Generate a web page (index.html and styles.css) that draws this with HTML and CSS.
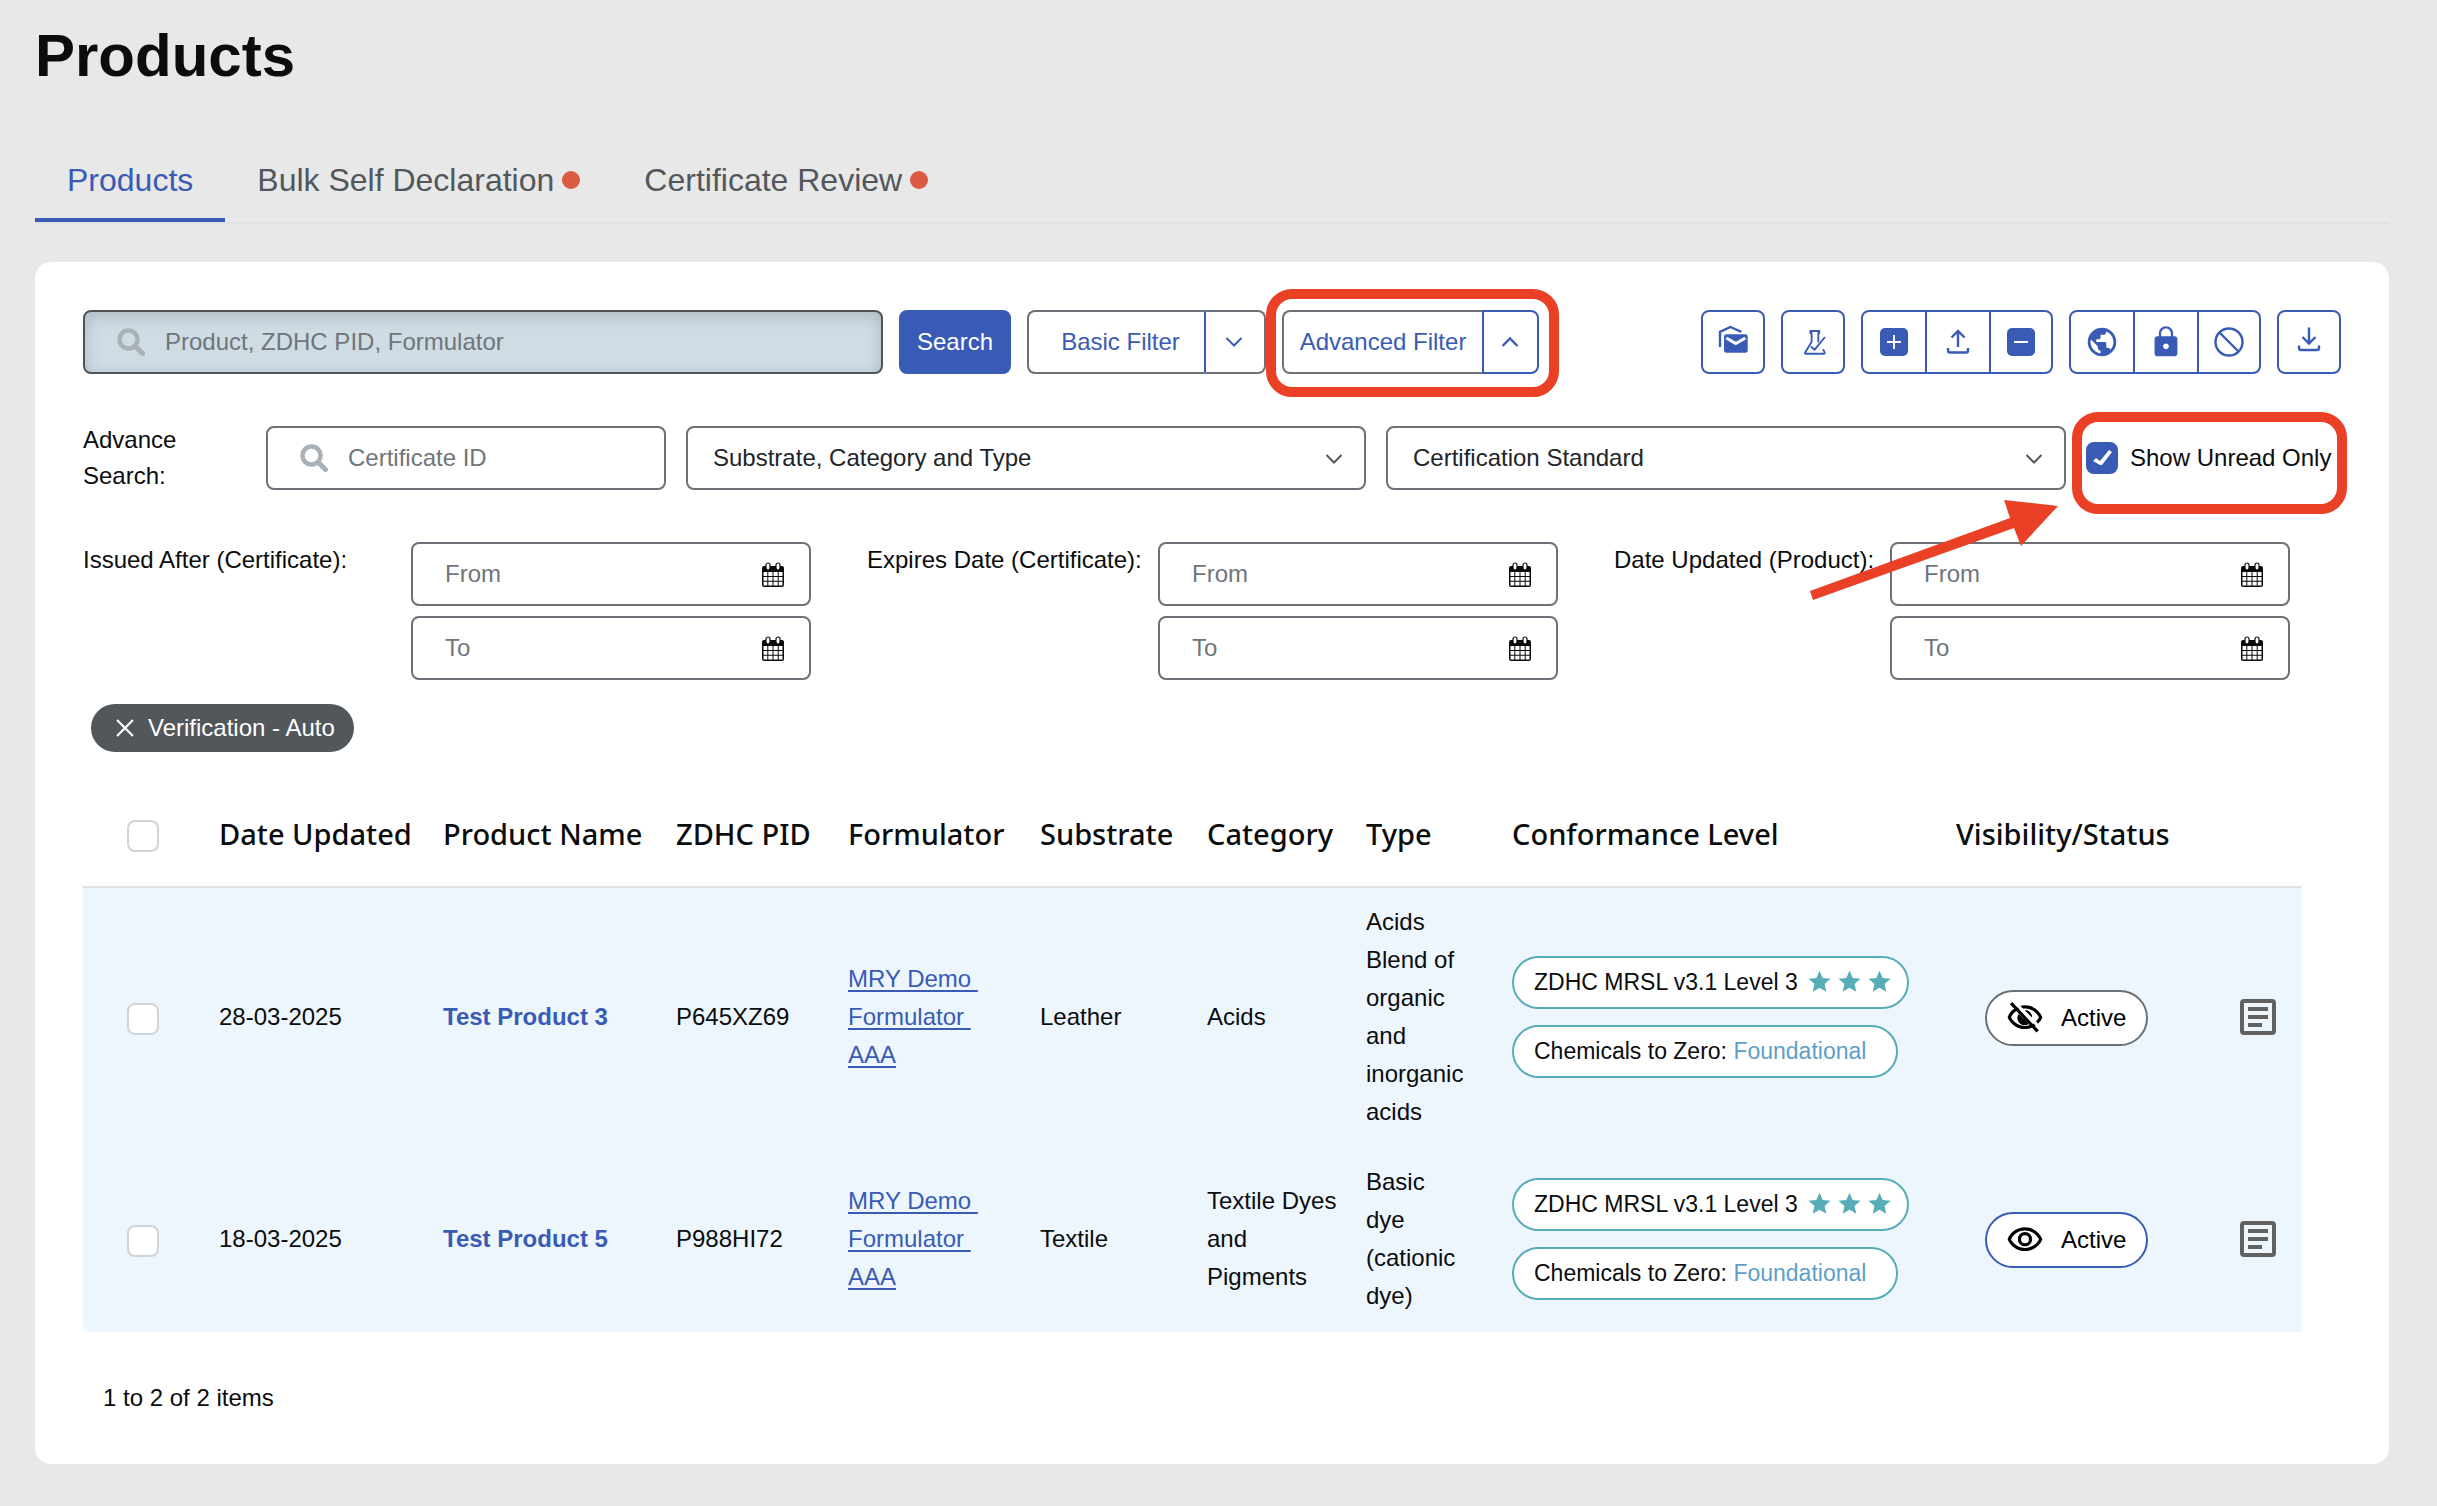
FILE: index.html
```html
<!DOCTYPE html>
<html lang="en">
<head>
<meta charset="utf-8">
<title>Products</title>
<meta name="viewport" content="width=device-width, initial-scale=1">
<link rel="stylesheet" href="styles.css">
</head>
<body>
<svg class="sprite" aria-hidden="true">
  <symbol id="search" viewBox="0 0 28 28"><circle cx="11.5" cy="11.5" r="9" fill="none" stroke="currentColor" stroke-width="4.4"/><path d="M18.500 18.500L25.500 25.500" stroke="currentColor" stroke-width="5" stroke-linecap="round"/></symbol>
  <symbol id="down" viewBox="0 0 18 12"><path d="M1.500 2L9 9.500L16.500 2" fill="none" stroke="currentColor" stroke-width="2"/></symbol>
  <symbol id="up" viewBox="0 0 18 12"><path d="M1.500 10L9 2.500L16.500 10" fill="none" stroke="currentColor" stroke-width="2.400"/></symbol>
  <symbol id="calendar" viewBox="0 0 24 26"><path d="M1 6a2 2 0 0 1 2-2h18a2 2 0 0 1 2 2v17a2 2 0 0 1-2 2H3a2 2 0 0 1-2-2z" fill="#0b0c0d"/><path d="M2.500 10h3.800v3.900H2.500zM7.300 10h4.200v3.900H7.300zM12.500 10h4.200v3.900h-4.200zM17.700 10h3.800v3.900h-3.800zM2.500 14.900h3.800v3.900H2.500zM7.300 14.900h4.200v3.900H7.300zM12.500 14.900h4.200v3.900h-4.200zM17.700 14.900h3.800v3.900h-3.800zM2.500 19.800h3.800v3.700H2.500zM7.300 19.800h4.200v3.700H7.300zM12.500 19.800h4.200v3.700h-4.200zM17.700 19.800h3.800v3.700h-3.800z" fill="#fff"/><rect x="5" y="1" width="4" height="7" rx="2" fill="#fff" stroke="#0b0c0d" stroke-width="1.200"/><rect x="15" y="1" width="4" height="7" rx="2" fill="#fff" stroke="#0b0c0d" stroke-width="1.200"/></symbol>
  <symbol id="star" viewBox="0 0 24 24"><path d="M12 .8l3.300 7.600 8.200.8-6.200 5.500 1.800 8.100L12 18.600l-7.100 4.200 1.800-8.100L.5 9.200l8.200-.8z" fill="currentColor"/></symbol>
  <symbol id="note" viewBox="0 0 36 36"><rect x="2" y="2" width="32" height="32" rx="2" fill="none" stroke="#616161" stroke-width="4"/><path d="M8 10h20M8 18h20M8 26h14" stroke="#616161" stroke-width="4"/></symbol>
  <symbol id="eye" viewBox="0 0 24 24"><path d="M12 6c3.790 0 7.170 2.130 8.820 5.500C19.170 14.870 15.790 17 12 17s-7.170-2.130-8.820-5.500C4.830 8.130 8.210 6 12 6m0-2C7 4 2.730 7.110 1 11.500 2.730 15.890 7 19 12 19s9.270-3.110 11-7.500C21.270 7.110 17 4 12 4zm0 5a2.500 2.500 0 0 1 0 5 2.500 2.500 0 0 1 0-5m0-2c-2.480 0-4.500 2.020-4.500 4.500S9.520 16 12 16s4.500-2.020 4.500-4.500S14.480 7 12 7z"/></symbol>
  <symbol id="eye-off" viewBox="0 0 24 24"><path d="M12 6c3.790 0 7.170 2.130 8.820 5.500C19.170 14.870 15.790 17 12 17s-7.170-2.130-8.820-5.500C4.830 8.130 8.210 6 12 6m0-2C7 4 2.730 7.110 1 11.500 2.730 15.890 7 19 12 19s9.270-3.110 11-7.500C21.270 7.110 17 4 12 4z"/><path d="M8 9.500L14.500 15.600A4.500 4.500 0 0 1 8 9.500zM12 7a4.500 4.500 0 0 1 4.500 4.500l-1.900-.6a2.600 2.600 0 0 0-2-2z"/><path d="M4.800 1.500L21.500 18.200" stroke="#fff" stroke-width="2"/><path d="M3.200 2.600L20 20.500" stroke="#000" stroke-width="2"/></symbol>
</svg>

<main class="page">
  <h1 class="title">Products</h1>
  <nav class="tabs" aria-label="Product sections">
    <a class="tab tab-active" href="#products">Products</a>
    <a class="tab" href="#declaration">Bulk Self Declaration<span class="dot"></span></a>
    <a class="tab" href="#review">Certificate Review<span class="dot"></span></a>
  </nav>

  <section class="card">
    <div class="toolbar">
      <div class="field field-main">
        <svg class="field-icon"><use href="#search"/></svg>
        <input class="input input-search input-tinted" type="text" aria-label="Search products" placeholder="Product, ZDHC PID, Formulator">
      </div>
      <button class="btn btn-primary" type="button">Search</button>
      <div class="split">
        <button class="btn split-text split-basic" type="button">Basic Filter</button>
        <button class="btn split-arrow" type="button" aria-label="Open basic filter"><svg class="chevron"><use href="#down"/></svg></button>
      </div>
      <div class="split">
        <button class="btn split-text split-advanced" type="button">Advanced Filter</button>
        <button class="btn split-arrow split-arrow-open" type="button" aria-label="Close advanced filter"><svg class="chevron"><use href="#up"/></svg></button>
        <span class="highlight highlight-filter"></span>
      </div>
      <div class="actions">
        <div class="group"><button class="tool" type="button" aria-label="Mark as read"><svg viewBox="0 0 40 40"><path d="M7 25V9.800L17.500 5l10.800 4.900" fill="none" stroke="currentColor" stroke-width="2.400"/><rect x="11" y="12.300" width="23.700" height="18.500" rx="2.500" fill="currentColor"/><path d="M13.300 16l9.500 5.600L32.300 16" fill="none" stroke="#fff" stroke-width="3"/></svg></button></div>
        <div class="group"><button class="tool" type="button" aria-label="Test results"><svg viewBox="0 0 40 40" fill="none" stroke="currentColor" stroke-width="1.900" stroke-linejoin="round"><path d="M18.600 20V11h-1.300V9h9v2h-1v9.200M18.600 20l-6.500 10.500q-.5 1.200.8 1.200h18.500q1-.6-1.400-4.400M18 24.500l3.500 3.300L32 15"/></svg></button></div>
        <div class="group">
          <button class="tool" type="button" aria-label="Add"><svg viewBox="0 0 40 40"><rect x="6" y="6" width="28" height="28" rx="5" fill="currentColor"/><path d="M20 13v14M13 20h14" stroke="#fff" stroke-width="2"/></svg></button>
          <button class="tool" type="button" aria-label="Upload"><svg viewBox="0 0 40 40" fill="none" stroke="currentColor" stroke-width="2.400"><path d="M20 25V9M13.500 15.500L20 9l6.500 6.500M10 26v2.500q0 2 2 2h16q2 0 2-2V26"/></svg></button>
          <button class="tool" type="button" aria-label="Remove"><svg viewBox="0 0 40 40"><rect x="6" y="6" width="28" height="28" rx="5" fill="currentColor"/><path d="M13 20h14" stroke="#fff" stroke-width="2"/></svg></button>
        </div>
        <div class="group">
          <button class="tool" type="button" aria-label="Make public"><svg viewBox="-2 -2 28 28"><path fill="currentColor" d="M12 2C6.480 2 2 6.480 2 12s4.480 10 10 10 10-4.480 10-10S17.520 2 12 2zm-1 17.930c-3.950-.49-7-3.850-7-7.930 0-.62.080-1.210.210-1.790L9 15v1c0 1.100.9 2 2 2v1.930zm6.900-2.540c-.26-.81-1-1.390-1.900-1.390h-1v-3c0-.55-.45-1-1-1H8v-2h2c.55 0 1-.45 1-1V7h2c1.100 0 2-.9 2-2v-.41c2.930 1.190 5 4.060 5 7.410 0 2.080-.8 3.970-2.100 5.390z"/></svg></button>
          <button class="tool" type="button" aria-label="Make private"><svg viewBox="-2 -2 28 28"><path fill="currentColor" d="M18 8h-1V6c0-2.760-2.240-5-5-5S7 3.240 7 6v2H6c-1.100 0-2 .9-2 2v10c0 1.100.9 2 2 2h12c1.100 0 2-.9 2-2V10c0-1.100-.9-2-2-2zm-6 9c-1.100 0-2-.9-2-2s.9-2 2-2 2 .9 2 2-.9 2-2 2zm3.400-9H8.600V6c0-1.880 1.520-3.400 3.400-3.400s3.400 1.520 3.400 3.400v2z"/></svg></button>
          <button class="tool" type="button" aria-label="Block"><svg viewBox="0 0 40 40" fill="none" stroke="currentColor" stroke-width="2.400"><circle cx="20" cy="20" r="13.500"/><path d="M10.500 10.500l19 19"/></svg></button>
        </div>
        <div class="group"><button class="tool" type="button" aria-label="Download"><svg viewBox="0 0 40 40" fill="none" stroke="currentColor" stroke-width="2.400"><path d="M20 5.500v16M13.500 15L20 21.500l6.500-6.500M10 23.500V26q0 2 2 2h16q2 0 2-2v-2.500"/></svg></button></div>
      </div>
    </div>

    <div class="advanced">
      <label class="label" for="certificate">Advance<br>Search:</label>
      <div class="field">
        <svg class="field-icon"><use href="#search"/></svg>
        <input class="input input-search" id="certificate" type="text" placeholder="Certificate ID">
      </div>
      <div class="field">
        <select class="input select" aria-label="Substrate, Category and Type"><option>Substrate, Category and Type</option></select>
        <svg class="chevron select-icon"><use href="#down"/></svg>
      </div>
      <div class="field">
        <select class="input select" aria-label="Certification Standard"><option>Certification Standard</option></select>
        <svg class="chevron select-icon"><use href="#down"/></svg>
      </div>
      <div class="unread">
        <label class="unread-label"><input class="check" type="checkbox" checked>Show Unread Only</label>
        <span class="highlight highlight-unread"></span>
        <svg class="arrow" viewBox="0 0 252 104" aria-hidden="true"><path d="M2 93L202 20L196 2L250 8L213 48L206 30L5 102z" fill="#ea4025"/></svg>
      </div>
    </div>

    <div class="dates">
      <fieldset class="range">
        <legend class="label range-label range-first">Issued After (Certificate):</legend>
        <div class="range-fields">
          <div class="field"><input class="input" type="text" aria-label="Issued from" placeholder="From"><svg class="date-icon"><use href="#calendar"/></svg></div>
          <div class="field"><input class="input" type="text" aria-label="Issued to" placeholder="To"><svg class="date-icon"><use href="#calendar"/></svg></div>
        </div>
      </fieldset>
      <fieldset class="range">
        <legend class="label range-label range-expires">Expires Date (Certificate):</legend>
        <div class="range-fields">
          <div class="field"><input class="input" type="text" aria-label="Expires from" placeholder="From"><svg class="date-icon"><use href="#calendar"/></svg></div>
          <div class="field"><input class="input" type="text" aria-label="Expires to" placeholder="To"><svg class="date-icon"><use href="#calendar"/></svg></div>
        </div>
      </fieldset>
      <fieldset class="range">
        <legend class="label range-label range-updated">Date Updated (Product):</legend>
        <div class="range-fields">
          <div class="field"><input class="input" type="text" aria-label="Updated from" placeholder="From"><svg class="date-icon"><use href="#calendar"/></svg></div>
          <div class="field"><input class="input" type="text" aria-label="Updated to" placeholder="To"><svg class="date-icon"><use href="#calendar"/></svg></div>
        </div>
      </fieldset>
    </div>

    <div class="chips">
      <button class="chip" type="button"><svg class="chip-icon" viewBox="0 0 18 18"><path d="M1 1l16 16M17 1L1 17" stroke="#fff" stroke-width="2.200"/></svg>Verification - Auto</button>
    </div>

    <table class="table">
      <colgroup>
        <col class="c-check"><col class="c-date"><col class="c-name"><col class="c-pid"><col class="c-formulator"><col class="c-substrate"><col class="c-category"><col class="c-type"><col class="c-level"><col class="c-status"><col class="c-note">
      </colgroup>
      <thead>
        <tr>
          <th class="check-cell"><input class="check" type="checkbox" aria-label="Select all"></th>
          <th>Date Updated</th><th>Product Name</th><th>ZDHC PID</th><th>Formulator</th><th>Substrate</th><th>Category</th><th>Type</th><th>Conformance Level</th><th>Visibility/Status</th><th></th>
        </tr>
      </thead>
      <tbody>
        <tr>
          <td class="check-cell"><input class="check" type="checkbox" aria-label="Select Test Product 3"></td>
          <td>28-03-2025</td>
          <td><a class="product" href="#p3">Test Product 3</a></td>
          <td>P645XZ69</td>
          <td><a class="link" href="#mry">MRY Demo&nbsp;<br>Formulator&nbsp;<br>AAA</a></td>
          <td>Leather</td>
          <td>Acids</td>
          <td>Acids<br>Blend of<br>organic<br>and<br>inorganic<br>acids</td>
          <td>
            <div class="levels">
              <span class="pill">ZDHC MRSL v3.1 Level 3<span class="stars"><svg><use href="#star"/></svg><svg><use href="#star"/></svg><svg><use href="#star"/></svg></span></span>
              <span class="pill pill-zero"><span>Chemicals to Zero: <span class="grade">Foundational</span></span></span>
            </div>
          </td>
          <td class="status-cell"><button class="status" type="button"><svg><use href="#eye-off"/></svg>Active</button></td>
          <td><button class="note" type="button" aria-label="Notes for Test Product 3"><svg><use href="#note"/></svg></button></td>
        </tr>
        <tr>
          <td class="check-cell"><input class="check" type="checkbox" aria-label="Select Test Product 5"></td>
          <td>18-03-2025</td>
          <td><a class="product" href="#p5">Test Product 5</a></td>
          <td>P988HI72</td>
          <td><a class="link" href="#mry">MRY Demo&nbsp;<br>Formulator&nbsp;<br>AAA</a></td>
          <td>Textile</td>
          <td>Textile Dyes<br>and<br>Pigments</td>
          <td>Basic<br>dye<br>(cationic<br>dye)</td>
          <td>
            <div class="levels">
              <span class="pill">ZDHC MRSL v3.1 Level 3<span class="stars"><svg><use href="#star"/></svg><svg><use href="#star"/></svg><svg><use href="#star"/></svg></span></span>
              <span class="pill pill-zero"><span>Chemicals to Zero: <span class="grade">Foundational</span></span></span>
            </div>
          </td>
          <td class="status-cell"><button class="status status-visible" type="button"><svg><use href="#eye"/></svg>Active</button></td>
          <td><button class="note" type="button" aria-label="Notes for Test Product 5"><svg><use href="#note"/></svg></button></td>
        </tr>
      </tbody>
    </table>
    <p class="count">1 to 2 of 2 items</p>
  </section>
</main>
</body>
</html>
```
FILE: styles.css
```css
* { box-sizing: border-box; }

body {
  margin: 0;
  background: #e8e8e8;
  color: #0b0c0d;
  font-family: "Liberation Sans", Arial, sans-serif;
  font-size: 24px;
  line-height: 36px;
}

button, input, select { font: inherit; color: inherit; }
button { cursor: pointer; padding: 0; }
svg { display: block; flex: none; }

.sprite { position: absolute; width: 0; height: 0; }

.page { padding: 20px 48px 42px 35px; }

.title { margin: 0 0 50px; font-size: 60px; line-height: 72px; font-weight: 700; }

/* Tabs */
.tabs { display: flex; border-bottom: 2px solid #dee2e6; }
.tab {
  display: flex;
  align-items: center;
  gap: 8px;
  padding: 19px 32px;
  border-bottom: 4px solid transparent;
  font-size: 32px;
  line-height: 38px;
  color: #52575c;
  text-decoration: none;
}
.tab-active { color: #395bb5; border-bottom-color: #395bb5; }
.dot { width: 18px; height: 18px; border-radius: 50%; background: #db5a42; }

.card { margin-top: 38px; padding: 48px; border-radius: 16px; background: #fff; }

/* Form controls */
.field { position: relative; }
.input {
  display: block;
  width: 100%;
  height: 64px;
  padding: 0 32px;
  border: 2px solid #6c7077;
  border-radius: 8px;
  background: #fff;
}
.input::placeholder { color: #6f757b; opacity: 1; }
.input-search { padding-left: 80px; }
.input-tinted {
  border-color: #505357;
  background: #cfdce4;
  box-shadow: inset 0 4px 16px rgba(0, 0, 0, 0.16);
}
.field-icon { position: absolute; left: 34px; top: 18px; width: 28px; height: 28px; color: #a9b1b8; }
.select { appearance: none; padding: 0 56px 0 25px; color: #212529; }
.chevron { width: 18px; height: 12px; }
.select-icon { position: absolute; right: 23px; top: 27px; color: #52575c; pointer-events: none; }
.date-icon { position: absolute; right: 26px; top: 20px; width: 24px; height: 26px; }

.check {
  appearance: none;
  display: grid;
  flex: none;
  width: 32px;
  height: 32px;
  margin: 0;
  border: 2px solid #ced4da;
  border-radius: 8px;
  background: #fff;
}
.check:checked { border-color: #395bb5; background: #395bb5; }
.check:checked::before {
  content: "";
  background: #fff;
  clip-path: polygon(5px 17px, 8px 14px, 12px 17px, 21px 6px, 24px 8px, 14px 21px, 12px 21px);
}

/* Toolbar */
.toolbar { display: flex; gap: 16px; }
.field-main { flex: 0 1 800px; }
.btn { height: 64px; border: 2px solid #6c7077; background: #fff; color: #395bb5; white-space: nowrap; }
.btn-primary { width: 112px; border-color: #395bb5; border-radius: 8px; background: #395bb5; color: #fff; }
.split { position: relative; display: flex; }
.split-text { border-right: 0; border-radius: 8px 0 0 8px; }
.split-basic { width: 177px; padding-left: 8px; }
.split-advanced { width: 200px; }
.split-arrow {
  display: grid;
  place-items: center;
  width: 62px;
  padding-right: 2px;
  border-left-color: #395bb5;
  border-radius: 0 8px 8px 0;
}
.split-arrow-open { width: 57px; border-color: #395bb5; }

.actions { display: flex; gap: 16px; margin-left: auto; }
.group { display: flex; border: 2px solid #395bb5; border-radius: 8px; }
.tool {
  display: grid;
  place-items: center;
  width: 62px;
  height: 60px;
  border: 0;
  background: none;
  color: #395bb5;
}
.tool:only-child { width: 60px; }
.tool + .tool { width: 64px; border-left: 2px solid #395bb5; }
.tool + .tool:last-child { width: 62px; }
.tool svg { width: 40px; height: 40px; }

/* Call-outs drawn over the controls */
.highlight { position: absolute; border: 10px solid #ea4025; border-radius: 26px; pointer-events: none; }
.highlight-filter { inset: -21px -20px -23px -16px; }
.highlight-unread { inset: -14px -6px -24px -14px; }
.arrow { position: absolute; left: -278px; top: 72px; z-index: 1; width: 252px; height: 104px; pointer-events: none; }

/* Advanced search */
.advanced {
  display: grid;
  grid-template-columns: 163px 400px 1fr 1fr 255px;
  align-items: center;
  gap: 20px;
  margin-top: 48px;
}
.unread { position: relative; height: 64px; }
.unread-label { display: flex; align-items: center; gap: 12px; height: 64px; white-space: nowrap; }

/* Date ranges */
.dates { display: flex; gap: 56px; margin-top: 48px; }
.range { display: flex; min-width: 0; margin: 0; padding: 0; border: 0; }
.range-label { float: left; padding: 0; white-space: nowrap; }
.range-first { width: 328px; }
.range-expires { width: 291px; }
.range-updated { width: 276px; }
.range-fields { display: grid; gap: 10px; width: 400px; }

/* Filter chips */
.chips { display: flex; margin: 24px 8px 32px; }
.chip {
  display: flex;
  align-items: center;
  gap: 14px;
  height: 48px;
  padding: 0 19px 0 25px;
  border: 0;
  border-radius: 24px;
  background: #52575c;
  color: #fff;
}
.chip-icon { width: 18px; height: 18px; }

/* Products table */
.table {
  width: calc(100% - 40px);
  border-spacing: 0;
  table-layout: fixed;
  line-height: 38px;
  text-align: left;
}
.c-check { width: 120px; }
.c-date { width: 224px; }
.c-name { width: 233px; }
.c-pid { width: 172px; }
.c-formulator { width: 192px; }
.c-substrate { width: 167px; }
.c-category { width: 159px; }
.c-type { width: 146px; }
.c-level { width: 444px; }
.c-status { width: 284px; }
.c-note { width: 77px; }
.table th {
  height: 104px;
  padding: 0 0 2px 16px;
  border-bottom: 2px solid #dee2e6;
  font-family: "Noto Sans", "Open Sans", sans-serif;
  font-size: 29px;
  font-weight: 500;
  white-space: nowrap;
}
.table td { padding: 15px 0 17px 16px; background: #edf6fd; white-space: nowrap; }
.table .check-cell { padding: 2px 0 0 44px; }
.table tr:last-child td:first-child { border-bottom-left-radius: 8px; }
.product { color: #395bb5; font-weight: 700; text-decoration: none; }
.link { color: #395bb5; text-underline-offset: 3px; text-decoration-thickness: 2px; }

.levels { display: flex; flex-direction: column; align-items: flex-start; gap: 16px; }
.pill {
  display: flex;
  align-items: center;
  gap: 10px;
  height: 53px;
  padding: 0 16px 2px 20px;
  border: 2px solid #57adb7;
  border-radius: 27px;
  background: #fff;
  font-size: 23px;
}
.pill-zero { padding-right: 30px; }
.grade { color: #5d9fc9; }
.stars { display: flex; gap: 7px; color: #57adb7; }
.stars svg { width: 23px; height: 23px; }

.status {
  display: flex;
  align-items: center;
  gap: 17px;
  height: 56px;
  padding: 0 20px 0 19px;
  border: 2px solid #6c7077;
  border-radius: 28px;
  background: #fff;
  color: #000;
}
.table .status-cell { padding: 16px 0 16px 45px; }
.status-visible { border-color: #395bb5; }
.status svg { width: 38px; height: 38px; }
.note { display: block; border: 0; background: none; }
.note svg { width: 36px; height: 36px; }

.count { margin: 48px 20px 0; }
```
